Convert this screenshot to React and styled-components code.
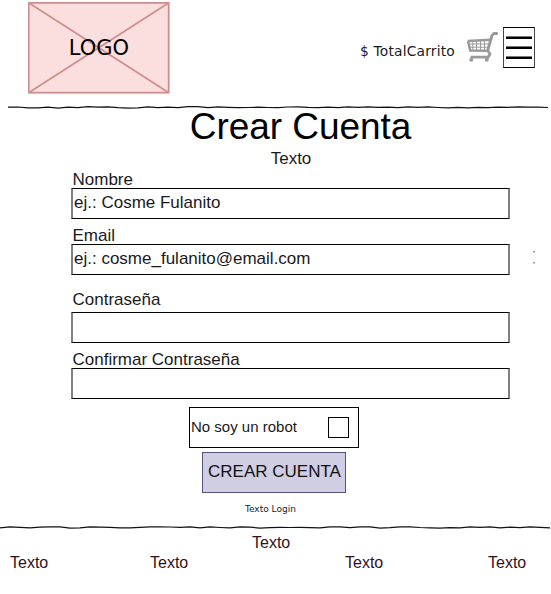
import React from "react";
import styled, { createGlobalStyle } from "styled-components";

const GlobalStyle = createGlobalStyle`
  * { box-sizing: border-box; }
  body { margin: 0; background: #fff; }
`;

const Page = styled.div`
  width: 551px;
  height: 594px;
  overflow: hidden;
  display: flex;
  flex-direction: column;
  background: #fff;
  color: #1a1a1a;
  font-family: "Liberation Sans", Arial, sans-serif;
  font-size: 17px;
  line-height: 18px;
  white-space: nowrap;
`;

const Header = styled.header`
  display: flex;
  height: 103px;
  padding: 2px 16px 0 28px;
`;

const Logo = styled.div`
  display: grid;
  width: 142px;
  height: 92px;
  > * { grid-area: 1 / 1; }
`;

const LogoText = styled.span`
  place-self: center;
  font: 21px/24px "DejaVu Sans", sans-serif;
  color: #000;
`;

const HeaderTools = styled.div`
  display: flex;
  align-items: flex-start;
  margin-left: auto;
  padding-top: 25px;
`;

const CartTotal = styled.span`
  margin: 15px 11px 0 0;
  font: 13.8px/18px "DejaVu Sans", sans-serif;
  letter-spacing: 0.2px;
`;

const CartIcon = styled.svg`
  margin: 4px 5px 0 0;
`;

const MenuButton = styled.button`
  display: flex;
  flex-direction: column;
  gap: 7px;
  width: 32px;
  height: 41px;
  padding: 8px 2px 0;
  background: #fff;
  border: solid #000;
  border-width: 1px 1.5px;
  border-color: #000 #444;
`;

const MenuLine = styled.span`
  height: 3px;
  background: #000;
  border: solid #777;
  border-width: 1px 0 0;
`;

const Divider = styled.svg`
  display: block;
  flex: none;
`;

const Main = styled.main`
  display: flex;
  flex-direction: column;
  align-items: center;
  height: 412px;
`;

const Title = styled.h1`
  margin: -5px 0 0;
  padding-left: 50px;
  font-size: 37px;
  font-weight: 400;
  line-height: 42px;
  letter-spacing: -0.05px;
  color: #000;
`;

const Subtitle = styled.p`
  margin: 2px 0 0;
  padding-left: 31px;
`;

const Form = styled.form`
  display: flex;
  flex-direction: column;
  align-items: flex-start;
  width: 551px;
  margin-top: 3px;
  padding-left: 71px;
`;

const Field = styled.label`
  display: flex;
  flex-direction: column;
  gap: ${(p) => p.$gap || 0}px;
  margin-bottom: ${(p) => p.$after}px;
`;

const LabelText = styled.span`
  height: 17px;
  padding-left: 1.5px;
`;

const FieldRow = styled.span`
  display: flex;
  align-items: center;
`;

const Input = styled.input`
  width: 439px;
  height: 31px;
  padding: 0 0 2px 1px;
  border: solid;
  border-width: 1px 2px;
  border-color: #000 #808080;
  border-radius: 0;
  outline: none;
  background: #fff;
  font: inherit;
  color: #1a1a1a;
  &::placeholder { color: #1a1a1a; opacity: 1; }
`;

const Marks = styled.span`
  display: flex;
  flex-direction: column;
  gap: 9px;
  margin: -5px 0 0 23px;
`;

const Mark = styled.i`
  width: 2px;
  height: 2px;
  background: #ccc;
  border-top: 1px solid #999;
`;

const RobotCheck = styled.label`
  display: flex;
  align-items: center;
  justify-content: space-between;
  width: 170px;
  height: 41px;
  margin-left: 118px;
  padding: 0 9px 0 1px;
  border: 1px solid #000;
  font-size: 15px;
`;

const RobotText = styled.span`
  padding-bottom: 2px;
`;

const Checkbox = styled.input`
  appearance: none;
  width: 21px;
  height: 21px;
  margin: 0;
  border: 1px solid #000;
  background: #fff;
`;

const Submit = styled.button`
  width: 144px;
  height: 41px;
  margin: 4px 0 0 131px;
  padding: 0 0 2px 1px;
  border: 1px solid #56517e;
  background: #d0cee2;
  font: inherit;
  color: #111;
`;

const LoginLink = styled.span`
  margin: 10px 0 0 174px;
  font: 9px/12px "DejaVu Sans", sans-serif;
`;

const Footer = styled.footer`
  padding: 3px 26px 0 10px;
  font-size: 16px;
  color: #33111a;
`;

const FooterTitle = styled.p`
  margin: 0 0 2px 242px;
`;

const FooterLinks = styled.nav`
  display: grid;
  grid-template-columns: 140px 195px 143px auto;
`;

// Heights of the hand-drawn stroke, one for each 10px step.
const HEADER_WAVE = [4, 4, 4.8, 4.8, 4.2, 5, 4.2, 4.6, 3.7, 4, 3.8, 4.7, 5, 4.8, 3.8, 4.7, 4.2, 4.5, 3.7, 3.7, 4.5, 4, 4.4, 4.7, 4.5, 4.2, 4.5, 4.6, 4, 3.8, 4.4, 4.5, 4.2, 4.7, 3.8, 4.4, 3.8, 4.4, 4.2, 4.6, 3.8, 4.4, 4, 4.5, 4.8, 4.5, 4.8, 4.5, 4.6, 4.2, 4.4, 3.9, 4.2, 4.1, 4.5];
const FOOTER_WAVE = [5, 4, 4.4, 4.8, 4.2, 3.9, 3.9, 5, 4.8, 4, 4.2, 4.4, 4.8, 4.8, 4.3, 3.9, 3.9, 4, 4.4, 4, 4.8, 4, 4.5, 4.8, 4, 4.2, 5, 4.7, 4.4, 4.5, 4.4, 4.7, 4.9, 3.9, 3.9, 4.7, 3.8, 3.8, 5, 4.6, 3.9, 3.9, 4.5, 4.8, 5, 4.6, 4.8, 3.8, 4.4, 3.8, 4.8, 4.2, 4.7, 3.8, 4.4, 4.8];

function Wave({ start, heights }) {
  const points = heights.map((y, i) => `${start + i * 10},${y}`).join(" ");
  return (
    <Divider width="551" height="8" viewBox="0 0 551 8">
      <polyline points={points} fill="none" stroke="#111" strokeWidth="1.25" />
    </Divider>
  );
}

function TextField({ label, children, gap, after, ...input }) {
  return (
    <Field $gap={gap} $after={after}>
      <LabelText>{label}</LabelText>
      <FieldRow>
        <Input {...input} />
        {children}
      </FieldRow>
    </Field>
  );
}

export default function App() {
  return (
    <Page>
      <GlobalStyle />
      <Header>
        <Logo>
          <svg width="142" height="92" viewBox="0 0 142 92">
            <g fill="#fbdfdf" stroke="#cf8f8f" strokeWidth="1.8">
              <rect x="0.7" y="0.9" width="140" height="89.8" />
              <path d="M1 1l139.5 89.5M140.500 1L1 90.500" />
            </g>
          </svg>
          <LogoText>LOGO</LogoText>
        </Logo>
        <HeaderTools>
          <CartTotal>$ TotalCarrito</CartTotal>
          <CartIcon width="32" height="32" viewBox="0 0 32 32" fill="none" stroke="#999">
            <path d="M30.700 2.500h-2.800L26 4.500 21.700 19.500" strokeWidth="2.800" strokeLinecap="round" strokeLinejoin="round" />
            <path d="M1.800 10l23-1.200M2 10l2.200 9.400 17.500.4" strokeWidth="2.500" />
            <path d="M6.800 10v9M10.500 10v9M14.500 10v9M18.500 10v9M2.500 13h21M3 16.200h20" strokeWidth="1" />
            <path d="M22 20l2 3-1.800 3.200H4.500" strokeWidth="2.800" strokeLinejoin="round" />
            <g fill="#999" stroke="none">
              <circle cx="5.300" cy="28.800" r="2" />
              <circle cx="20.800" cy="28.800" r="2" />
            </g>
          </CartIcon>
          <MenuButton aria-label="Menu">
            <MenuLine />
            <MenuLine />
            <MenuLine />
          </MenuButton>
        </HeaderTools>
      </Header>
      <Wave start={8} heights={HEADER_WAVE} />
      <Main>
        <Title>Crear Cuenta</Title>
        <Subtitle>Texto</Subtitle>
        <Form>
          <TextField label="Nombre" placeholder="ej.: Cosme Fulanito" after={8} />
          <TextField label="Email" placeholder="ej.: cosme_fulanito@email.com" after={16}>
            <Marks>
              <Mark />
              <Mark />
            </Marks>
          </TextField>
          <TextField label="Contraseña" type="password" gap={4} after={8} />
          <TextField label="Confirmar Contraseña" type="password" after={8} />
          <RobotCheck>
            <RobotText>No soy un robot</RobotText>
            <Checkbox type="checkbox" />
          </RobotCheck>
          <Submit type="button">CREAR CUENTA</Submit>
          <LoginLink>Texto Login</LoginLink>
        </Form>
      </Main>
      <Wave start={0} heights={FOOTER_WAVE} />
      <Footer>
        <FooterTitle>Texto</FooterTitle>
        <FooterLinks>
          <span>Texto</span>
          <span>Texto</span>
          <span>Texto</span>
          <span>Texto</span>
        </FooterLinks>
      </Footer>
    </Page>
  );
}
